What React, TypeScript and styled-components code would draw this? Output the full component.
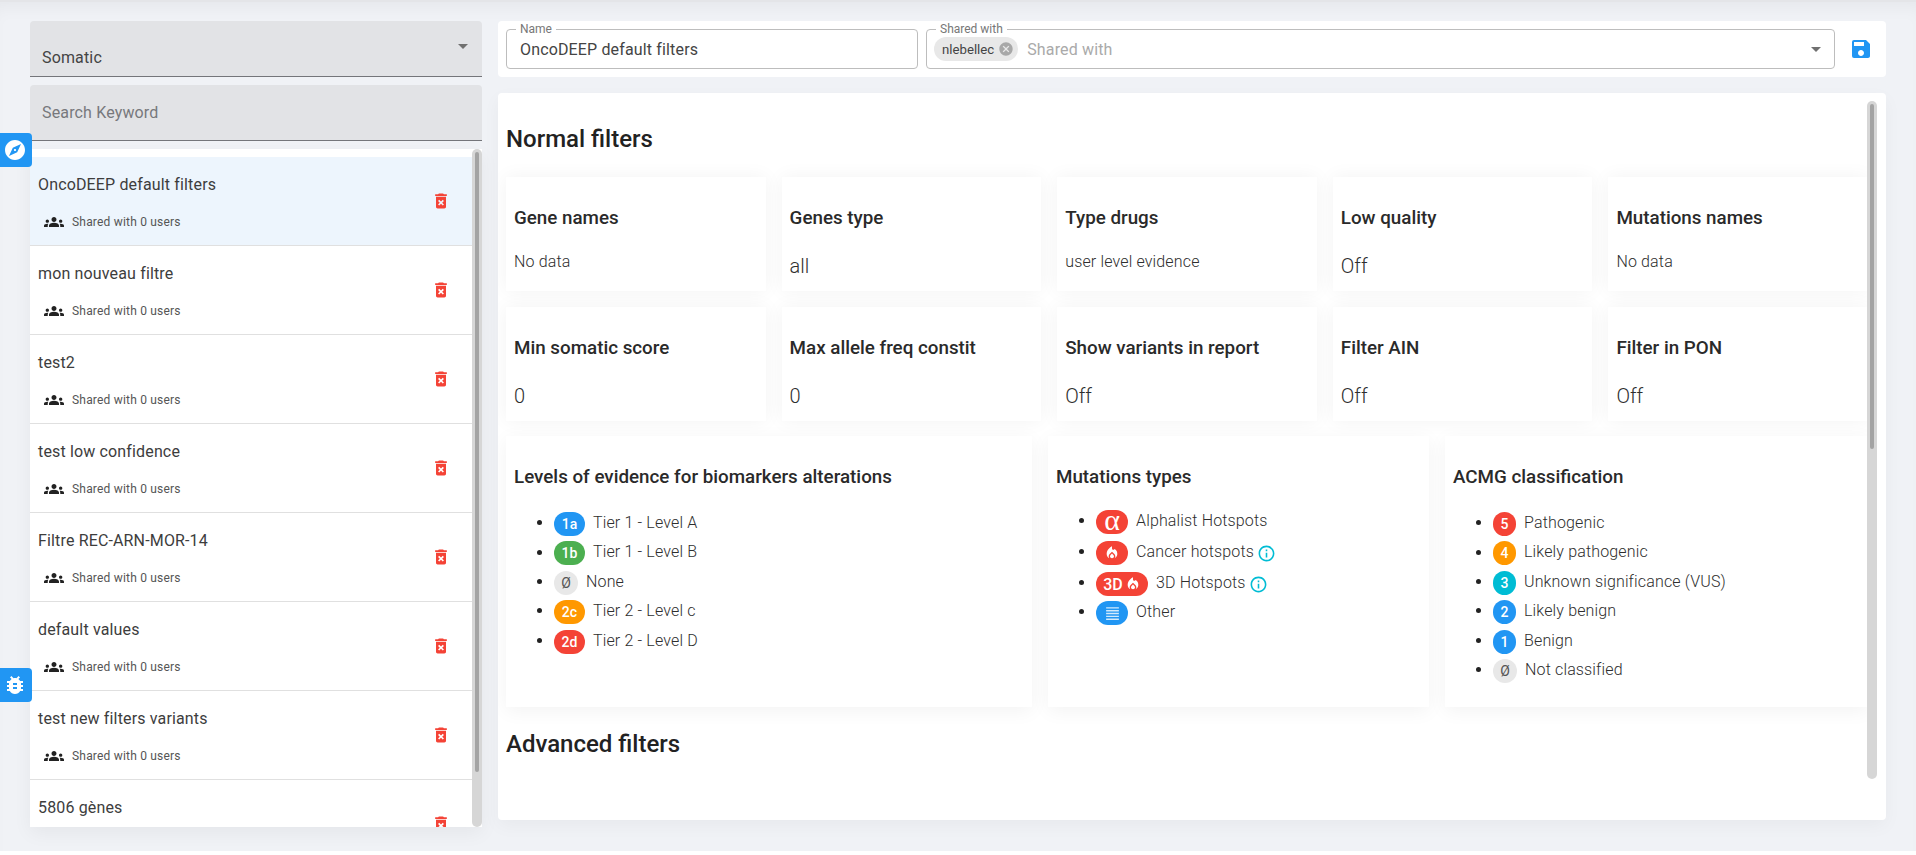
import { ReactNode } from "react";
import styled, { createGlobalStyle } from "styled-components";
import {
  MdArrowDropDown,
  MdBugReport,
  MdCancel,
  MdDeleteForever,
  MdExplore,
  MdFormatAlignJustify,
  MdGroups,
  MdInfoOutline,
  MdLocalFireDepartment,
  MdSave,
} from "react-icons/md";

const filters = [
  "OncoDEEP default filters",
  "mon nouveau filtre",
  "test2",
  "test low confidence",
  "Filtre REC-ARN-MOR-14",
  "default values",
  "test new filters variants",
  "5806 gènes",
];

const normalCards = [
  { title: "Gene names", value: "No data", small: true },
  { title: "Genes type", value: "all" },
  { title: "Type drugs", value: "user level evidence", small: true },
  { title: "Low quality", value: "Off" },
  { title: "Mutations names", value: "No data", small: true },
  { title: "Min somatic score", value: "0" },
  { title: "Max allele freq constit", value: "0" },
  { title: "Show variants in report", value: "Off" },
  { title: "Filter AIN", value: "Off" },
  { title: "Filter in PON", value: "Off" },
];

const levels = [
  { chip: "1a", color: "#2196f3", label: "Tier 1 - Level A" },
  { chip: "1b", color: "#4caf50", label: "Tier 1 - Level B" },
  { chip: "Ø", color: "#e8e8e8", label: "None" },
  { chip: "2c", color: "#ff9800", label: "Tier 2 - Level c" },
  { chip: "2d", color: "#f44336", label: "Tier 2 - Level D" },
];

const acmg = [
  { chip: "5", color: "#f44336", label: "Pathogenic" },
  { chip: "4", color: "#ff9800", label: "Likely pathogenic" },
  { chip: "3", color: "#00bcd4", label: "Unknown significance (VUS)" },
  { chip: "2", color: "#2196f3", label: "Likely benign" },
  { chip: "1", color: "#2196f3", label: "Benign" },
  { chip: "Ø", color: "#e8e8e8", label: "Not classified" },
];

const GlobalStyle = createGlobalStyle`
  html, body {
    margin: 0;
    padding: 0;
    background: #fff;
    font-family: Roboto, "Liberation Sans", sans-serif;
  }
  * {
    box-sizing: border-box;
  }
`;

const Page = styled.div`
  position: relative;
  height: 851px;
  overflow: hidden;
  background: #f0f2f6;
  border-top: 2px solid #e4e5e8;
  box-shadow: inset 0 14px 18px -10px rgba(0, 0, 0, 0.05);
  display: grid;
  grid-template-columns: 452px 1388px;
  column-gap: 16px;
  padding: 19px 0 0 30px;
`;

const LeftColumn = styled.aside`
  display: flex;
  flex-direction: column;
  gap: 8px;
  height: 806px;
`;

const FilledField = styled.div`
  height: 56px;
  flex: none;
  display: flex;
  justify-content: space-between;
  background: #e2e3e6;
  border-bottom: 1px solid #74757a;
  border-radius: 4px 4px 0 0;
  padding: 0 12px;
  font-size: 16px;
  letter-spacing: 0.15px;
`;

const SelectText = styled.span`
  color: #444;
  margin-top: 27px;
`;

const SelectArrow = styled(MdArrowDropDown)`
  color: #707070;
  margin: 13px -5px 0 0;
`;

const SearchText = styled.span`
  color: #77787c;
  margin-top: 18px;
`;

const ListPanel = styled.div`
  position: relative;
  flex: 1;
  min-height: 0;
  overflow: hidden;
  background: #fff;
  padding: 8px 10px 0 0;
  box-shadow: 0 6px 18px rgba(0, 0, 0, 0.05);
`;

const ListItem = styled.div<{ $active?: boolean }>`
  height: 89px;
  display: flex;
  justify-content: space-between;
  align-items: center;
  padding: 0 21px 0 8px;
  background: ${(p) => (p.$active ? "#edf5fd" : "#fff")};
  border-bottom: 1px solid #e0e0e0;
`;

const ItemText = styled.div`
  display: flex;
  flex-direction: column;
  gap: 18px;
  margin-top: 4px;
`;

const ItemTitle = styled.span`
  font-size: 16px;
  letter-spacing: 0.15px;
  color: #3d3d3d;
`;

const ItemShared = styled.span`
  display: flex;
  align-items: center;
  gap: 8px;
  padding-left: 6px;
  font-size: 12px;
  letter-spacing: 0.2px;
  color: #555;
  svg {
    color: #222;
  }
`;

const DeleteIcon = styled(MdDeleteForever)`
  color: #f44336;
  flex: none;
`;

const ScrollTrack = styled.div`
  position: absolute;
  top: 0;
  right: 0;
  bottom: 0;
  width: 10px;
  background: #d6d6d6;
  border-radius: 5px;
`;

const MainScrollTrack = styled(ScrollTrack)`
  top: 8px;
  right: 9px;
  bottom: 41px;
`;

const ScrollThumb = styled.div<{ $height: number }>`
  position: absolute;
  top: 3px;
  left: 3px;
  width: 4px;
  height: ${(p) => p.$height}px;
  background: #a3a3a3;
  border-radius: 2px;
`;

const SideTab = styled.div<{ $top: number }>`
  position: absolute;
  left: 0;
  top: ${(p) => p.$top}px;
  width: 32px;
  height: 34px;
  padding-right: 2px;
  display: flex;
  align-items: center;
  justify-content: center;
  background: #2196f3;
  color: #fff;
  border-radius: 0 4px 4px 0;
`;

const RightColumn = styled.main`
  display: flex;
  flex-direction: column;
  gap: 16px;
`;

const HeaderCard = styled.div`
  height: 56px;
  background: #fff;
  border-radius: 4px;
  display: flex;
  align-items: center;
  gap: 8px;
  padding: 0 13px 0 8px;
`;

const OutlinedField = styled.div<{ $width?: number }>`
  position: relative;
  flex: ${(p) => (p.$width ? `0 0 ${p.$width}px` : "1")};
  height: 40px;
  border: 1px solid #bdbdbd;
  border-radius: 4px;
  display: flex;
  align-items: center;
  padding: 0 13px;
  font-size: 16px;
  letter-spacing: 0.15px;
  color: #444;
`;

const FieldLegend = styled.span`
  position: absolute;
  top: -7px;
  left: 9px;
  padding: 0 4px;
  background: #fff;
  font-size: 12px;
  line-height: 12px;
  letter-spacing: 0;
  color: #777;
`;

const UserChip = styled.span`
  display: flex;
  align-items: center;
  gap: 4px;
  height: 24px;
  padding: 0 4px 0 8px;
  margin-left: -6px;
  border-radius: 12px;
  background: #e8e8e8;
  font-size: 13.2px;
  letter-spacing: 0;
  color: #444;
  svg {
    color: #a8a8a8;
  }
`;

const Placeholder = styled.span`
  margin-left: 9px;
  flex: 1;
  color: #aaa;
`;

const FieldArrow = styled(MdArrowDropDown)`
  color: #707070;
  margin-right: -7px;
`;

const SaveIcon = styled(MdSave)`
  color: #2196f3;
  flex: none;
  margin-left: 6px;
`;

const MainCard = styled.div`
  position: relative;
  height: 727px;
  background: #fff;
  border-radius: 4px;
  padding: 8px 0 41px 8px;
  box-shadow: 0 6px 18px rgba(0, 0, 0, 0.04);
`;

const ScrollArea = styled.div`
  height: 100%;
  margin-right: 18px;
  overflow: hidden;
  margin-left: -8px;
  padding-left: 8px;
`;

const SectionTitle = styled.h2`
  margin: 0;
  font-size: 24px;
  line-height: 32px;
  font-weight: 500;
  color: #222;
`;

const FirstTitle = styled(SectionTitle)`
  margin-top: 22px;
`;

const AdvancedTitle = styled(SectionTitle)`
  margin-top: 21px;
`;

const SmallGrid = styled.div`
  display: grid;
  grid-template-columns: repeat(5, 1fr);
  gap: 16px;
  margin-top: 22px;
`;

const InfoCard = styled.div`
  height: 114px;
  padding: 0 8px;
  background: #fff;
  box-shadow: 0 0 18px rgba(0, 0, 0, 0.05);
  display: flex;
  flex-direction: column;
`;

const CardTitle = styled.h3`
  margin: 31px 0 0;
  font-size: 18.8px;
  line-height: 20px;
  font-weight: 500;
  color: #2a2a2a;
`;

const CardValue = styled.div<{ $small?: boolean }>`
  margin-top: ${(p) => (p.$small ? "24px" : "27px")};
  font-size: ${(p) => (p.$small ? "16px" : "20px")};
  line-height: ${(p) => (p.$small ? "20px" : "22px")};
  letter-spacing: ${(p) => (p.$small ? "0.15px" : "0")};
  font-weight: 300;
  color: #2e2e2e;
`;

const LegendGrid = styled.div`
  display: grid;
  grid-template-columns: 526px 381px 1fr;
  gap: 16px;
  margin-top: 15px;
`;

const LegendCard = styled.div`
  height: 271px;
  padding: 0 8px;
  background: #fff;
  box-shadow: 0 4px 18px rgba(0, 0, 0, 0.05);
`;

const LegendList = styled.ul`
  margin: 25px 0 0;
  padding-left: 40px;
  color: #222;
`;

const MutationList = styled(LegendList)`
  margin-top: 23px;
  li:nth-child(1),
  li:nth-child(2) {
    height: 31px;
  }
  li:nth-child(3) {
    height: 29px;
  }
`;

const LegendItem = styled.li`
  height: 29.4px;
  font-size: 16px;
  letter-spacing: 0.15px;
`;

const LegendLabel = styled.span`
  color: #2e2e2e;
  font-weight: 300;
`;

const Chip = styled.span<{ $color: string; $width: number; $dark?: boolean }>`
  display: inline-flex;
  align-items: center;
  justify-content: center;
  gap: 2px;
  vertical-align: middle;
  width: ${(p) => p.$width}px;
  height: 24px;
  margin-right: 8px;
  border-radius: 12px;
  background: ${(p) => p.$color};
  color: ${(p) => (p.$dark ? "#555" : "#fff")};
  font-size: 14px;
  font-weight: ${(p) => (p.$dark ? 400 : 500)};
  letter-spacing: 0;
`;

const AlphaGlyph = styled.span`
  font-family: "Liberation Serif", serif;
  font-size: 30px;
  line-height: 24px;
  margin-top: -4px;
`;

const Chip3D = styled.span`
  font-size: 16px;
`;

const InfoIcon = styled(MdInfoOutline)`
  color: #00bcd4;
  vertical-align: middle;
  margin-left: 3px;
`;

const LinesIcon = styled(MdFormatAlignJustify)`
  opacity: 0.8;
`;

const Legend = ({ items }: { items: { chip: string; color: string; label: string }[] }) => (
  <LegendList>
    {items.map((it) => (
      <LegendItem key={it.label}>
        <Chip
          $color={it.color}
          $width={it.chip === "Ø" ? 24 : it.chip.length > 1 ? 31 : 23}
          $dark={it.chip === "Ø"}
        >
          {it.chip}
        </Chip>
        <LegendLabel>{it.label}</LegendLabel>
      </LegendItem>
    ))}
  </LegendList>
);

const MutationRow = ({ chip, width, label, info }: { chip: ReactNode; width: number; label: string; info?: boolean }) => (
  <LegendItem>
    <Chip $color={label === "Other" ? "#2196f3" : "#f44336"} $width={width}>
      {chip}
    </Chip>
    <LegendLabel>{label}</LegendLabel>
    {info && <InfoIcon size={19} />}
  </LegendItem>
);

const App = () => {
  return (
    <Page>
      <GlobalStyle />
      <LeftColumn>
        <FilledField>
          <SelectText>Somatic</SelectText>
          <SelectArrow size={24} />
        </FilledField>
        <FilledField>
          <SearchText>Search Keyword</SearchText>
        </FilledField>
        <ListPanel>
          {filters.map((name, i) => (
            <ListItem key={name} $active={i === 0}>
              <ItemText>
                <ItemTitle>{name}</ItemTitle>
                <ItemShared>
                  <MdGroups size={20} />
                  Shared with 0 users
                </ItemShared>
              </ItemText>
              <DeleteIcon size={20} />
            </ListItem>
          ))}
          <ScrollTrack>
            <ScrollThumb $height={620} />
          </ScrollTrack>
        </ListPanel>
      </LeftColumn>
      <RightColumn>
        <HeaderCard>
          <OutlinedField $width={412}>
            <FieldLegend>Name</FieldLegend>
            OncoDEEP default filters
          </OutlinedField>
          <OutlinedField>
            <FieldLegend>Shared with</FieldLegend>
            <UserChip>
              nlebellec
              <MdCancel size={16} />
            </UserChip>
            <Placeholder>Shared with</Placeholder>
            <FieldArrow size={24} />
          </OutlinedField>
          <SaveIcon size={24} />
        </HeaderCard>
        <MainCard>
          <ScrollArea>
            <FirstTitle>Normal filters</FirstTitle>
            <SmallGrid>
              {normalCards.map((c) => (
                <InfoCard key={c.title}>
                  <CardTitle>{c.title}</CardTitle>
                  <CardValue $small={c.small}>{c.value}</CardValue>
                </InfoCard>
              ))}
            </SmallGrid>
            <LegendGrid>
              <LegendCard>
                <CardTitle>Levels of evidence for biomarkers alterations</CardTitle>
                <Legend items={levels} />
              </LegendCard>
              <LegendCard>
                <CardTitle>Mutations types</CardTitle>
                <MutationList>
                  <MutationRow chip={<AlphaGlyph>α</AlphaGlyph>} width={32} label="Alphalist Hotspots" />
                  <MutationRow chip={<MdLocalFireDepartment size={16} />} width={32} label="Cancer hotspots" info />
                  <MutationRow
                    chip={
                      <>
                        <Chip3D>3D</Chip3D>
                        <MdLocalFireDepartment size={16} />
                      </>
                    }
                    width={52}
                    label="3D Hotspots"
                    info
                  />
                  <MutationRow chip={<LinesIcon size={17} />} width={32} label="Other" />
                </MutationList>
              </LegendCard>
              <LegendCard>
                <CardTitle>ACMG classification</CardTitle>
                <Legend items={acmg} />
              </LegendCard>
            </LegendGrid>
            <AdvancedTitle>Advanced filters</AdvancedTitle>
          </ScrollArea>
          <MainScrollTrack>
            <ScrollThumb $height={345} />
          </MainScrollTrack>
        </MainCard>
      </RightColumn>
      <SideTab $top={131}>
        <MdExplore size={24} />
      </SideTab>
      <SideTab $top={666}>
        <MdBugReport size={24} />
      </SideTab>
    </Page>
  );
};

export default App;
